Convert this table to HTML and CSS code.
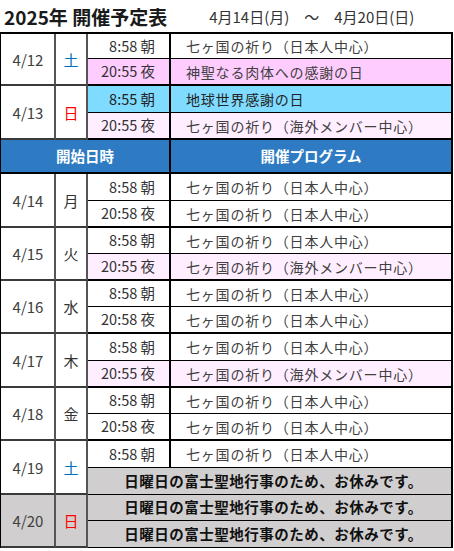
FILE: index.html
```html
<!DOCTYPE html>
<html lang="ja">
<head>
<meta charset="utf-8">
<title>2025年 開催予定表</title>
<link rel="stylesheet" href="styles.css">
</head>
<body>
<div class="titlebar">
  <h1 class="title">2025年 開催予定表</h1>
  <div class="range">4月14日(月)　～　4月20日(日)</div>
</div>
<div class="grid">
  <div class="c date">4/12</div>
  <div class="c day sat">土</div>
  <div class="c time">8:58 朝</div>
  <div class="c prog">七ヶ国の祈り（日本人中心）</div>
  <div class="c time end pink">20:55 夜</div>
  <div class="c prog end pink">神聖なる肉体への感謝の日</div>

  <div class="c date">4/13</div>
  <div class="c day sun">日</div>
  <div class="c time cyan">8:55 朝</div>
  <div class="c prog cyan">地球世界感謝の日</div>
  <div class="c time end lpink">20:55 夜</div>
  <div class="c prog end lpink">七ヶ国の祈り（海外メンバー中心）</div>

  <div class="c head head-wide">開始日時</div>
  <div class="c head">開催プログラム</div>

  <div class="c date">4/14</div>
  <div class="c day">月</div>
  <div class="c time">8:58 朝</div>
  <div class="c prog">七ヶ国の祈り（日本人中心）</div>
  <div class="c time end">20:58 夜</div>
  <div class="c prog end">七ヶ国の祈り（日本人中心）</div>

  <div class="c date">4/15</div>
  <div class="c day">火</div>
  <div class="c time">8:58 朝</div>
  <div class="c prog">七ヶ国の祈り（日本人中心）</div>
  <div class="c time end lpink">20:55 夜</div>
  <div class="c prog end lpink">七ヶ国の祈り（海外メンバー中心）</div>

  <div class="c date">4/16</div>
  <div class="c day">水</div>
  <div class="c time">8:58 朝</div>
  <div class="c prog">七ヶ国の祈り（日本人中心）</div>
  <div class="c time end">20:58 夜</div>
  <div class="c prog end">七ヶ国の祈り（日本人中心）</div>

  <div class="c date">4/17</div>
  <div class="c day">木</div>
  <div class="c time">8:58 朝</div>
  <div class="c prog">七ヶ国の祈り（日本人中心）</div>
  <div class="c time end lpink">20:55 夜</div>
  <div class="c prog end lpink">七ヶ国の祈り（海外メンバー中心）</div>

  <div class="c date">4/18</div>
  <div class="c day">金</div>
  <div class="c time">8:58 朝</div>
  <div class="c prog">七ヶ国の祈り（日本人中心）</div>
  <div class="c time end">20:58 夜</div>
  <div class="c prog end">七ヶ国の祈り（日本人中心）</div>

  <div class="c date">4/19</div>
  <div class="c day sat">土</div>
  <div class="c time">8:58 朝</div>
  <div class="c prog">七ヶ国の祈り（日本人中心）</div>
  <div class="c rest end">日曜日の富士聖地行事のため、お休みです。</div>

  <div class="c date off">4/20</div>
  <div class="c day sun off">日</div>
  <div class="c rest">日曜日の富士聖地行事のため、お休みです。</div>
  <div class="c rest end">日曜日の富士聖地行事のため、お休みです。</div>
</div>
</body>
</html>
```

FILE: styles.css
```css
body {
  margin: 0;
  background: #ffffff;
  color: #404040;
  font-family: "Noto Sans CJK JP", "Noto Sans", sans-serif;
}

.titlebar {
  height: 32px;
  display: flex;
  align-items: center;
  padding-left: 4px;
}

.title {
  margin: 0;
  font-size: 19px;
  font-weight: 700;
  color: #1a1a1a;
  line-height: 1;
}

.range {
  margin-left: 42px;
  font-size: 15px;
  color: #333333;
  line-height: 1;
}

.grid {
  display: grid;
  width: max-content;
  grid-template-columns: 55px 32px 83px 282px;
  grid-template-rows:
    25px 27px
    27px 27px
    34px
    27px 27px
    26px 27px
    26px 27px
    27px 27px
    26px 27px
    27px 27px
    26px 27px;
  border-top: 2px solid #000000;
  border-left: 1px solid #000000;
}

.c {
  box-sizing: border-box;
  display: flex;
  align-items: center;
  font-size: 14px;
  line-height: 1;
  white-space: nowrap;
}

.date,
.day {
  grid-row: span 2;
  justify-content: center;
  font-size: 15px;
  border-right: 2px solid #555555;
  border-bottom: 2px solid #3a3a3a;
}

.date {
  color: #404040;
  padding-left: 1px;
}

.day {
  color: #333333;
}

.sat {
  color: #0070c0;
}

.sun {
  color: #ff0000;
}

.time {
  justify-content: flex-end;
  padding-right: 14px;
  font-size: 14.5px;
  color: #333333;
  border-right: 2px solid #000000;
  border-bottom: 1px solid #000000;
}

.prog {
  padding-left: 15px;
  letter-spacing: 0.8px;
  color: #404040;
  border-right: 2px solid #000000;
  border-bottom: 1px solid #000000;
}

.end {
  border-bottom-width: 2px;
}

.pink {
  background: #ffccff;
}

.lpink {
  background: #ffeeff;
}

.cyan {
  background: #7fdbff;
  color: #222222;
}

.head {
  justify-content: center;
  background: #2e7bc4;
  color: #ffffff;
  font-weight: 700;
  font-size: 14.5px;
  border-right: 2px solid #000000;
  border-bottom: 2px solid #000000;
}

.head-wide {
  grid-column: span 3;
}

.rest {
  grid-column: span 2;
  justify-content: center;
  padding-left: 8px;
  background: #d0cece;
  color: #111111;
  font-weight: 700;
  font-size: 14.5px;
  letter-spacing: 0.5px;
  border-right: 2px solid #000000;
  border-bottom: 1px solid #000000;
}

.off {
  background: #d0cece;
}
```
